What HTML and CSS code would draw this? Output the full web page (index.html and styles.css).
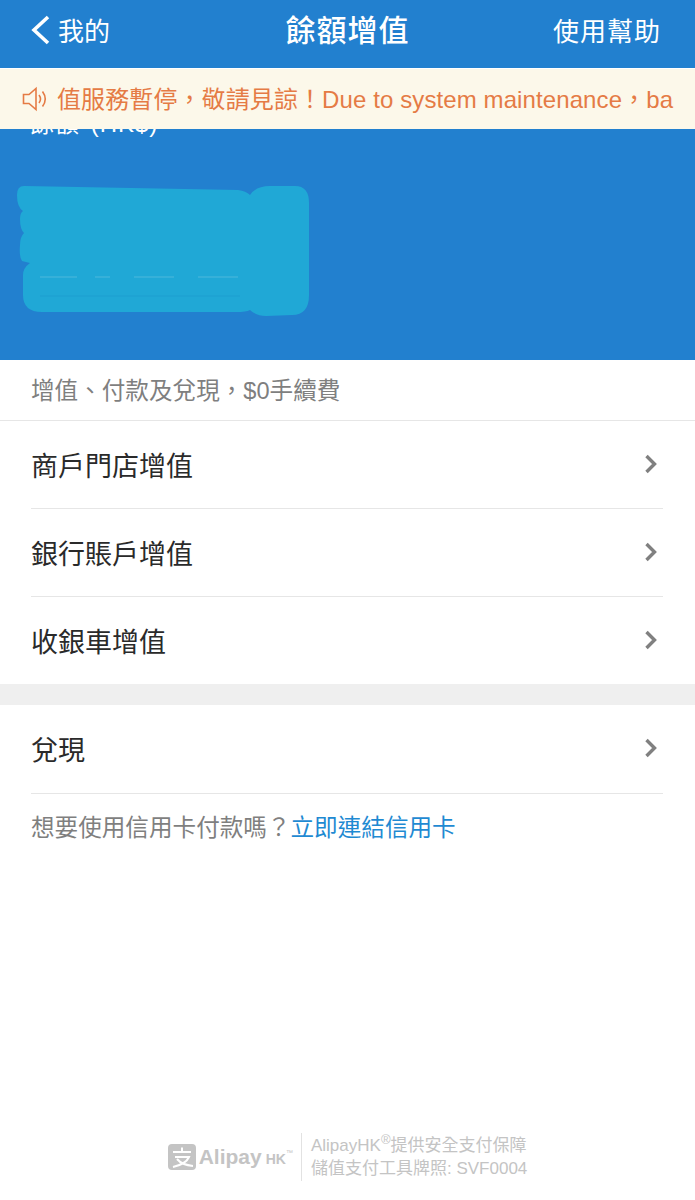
FILE: index.html
```html
<!DOCTYPE html>
<html>
<head>
<meta charset="UTF-8">
<title>餘額增值</title>
<link rel="stylesheet" href="styles.css">
</head>
<body>
	<div class="page">
		<div class="nav">
			<div class="nav_back">
				<svg class="back_icon" width="20" height="30" viewBox="0 0 20 30"><path d="M18 2 L4 15 L18 28" fill="none" stroke="#fff" stroke-width="3.6"/></svg>
				<span>我的</span>
			</div>
			<div class="nav_title">餘額增值</div>
			<div class="nav_help">使用幫助</div>
		</div>
		<div class="notice">
			<svg class="notice_icon" width="28" height="26" viewBox="0 0 28 26"><path d="M1.5 8.5 H7 L14 2.5 V23.5 L7 17.5 H1.5 Z" fill="none" stroke="#e57b45" stroke-width="1.6"/><path d="M17 9 Q20 13 17 17 M20.5 5.5 Q26 13 20.5 20.5" fill="none" stroke="#e57b45" stroke-width="1.6"/></svg>
			<div class="notice_text">值服務暫停，敬請見諒！Due to system maintenance，ba</div>
		</div>
		<div class="balance">
			<div class="balance_label">餘額 (HK$)</div>
			<svg class="scribble" width="295" height="134" viewBox="0 0 295 134"><path d="M10 3 L224 7 Q232 8 236 12 Q242 3 256 3 L281 3 Q295 3 295 20 L295 112 Q295 132 278 132 L252 133 Q242 133 236 127 Q232 129 222 129 L28 129 Q9 129 9 112 L9 92 Q9 85 16 80 L8 78 Q5 74 6 62 Q6 54 10 50 Q6 46 6 36 Q6 30 9 28 Q3 24 3 12 Q3 3 10 3 Z" fill="#20a8d6"/><path d="M26 94 H63 M81 94 H96 M120 94 H160 M184 94 H224" stroke="#4cb8dc" stroke-width="1" fill="none"/><path d="M26 113 H226" stroke="#1d9ed0" stroke-width="1" fill="none"/></svg>
		</div>
		<div class="hint">增值、付款及兌現，$0手續費</div>
		<div class="list">
			<div class="row"><span>商戶門店增值</span><svg class="arrow" width="14" height="20" viewBox="0 0 14 20"><path d="M2.5 2 L10.5 10 L2.5 18" fill="none" stroke="#808080" stroke-width="3.4"/></svg></div>
			<div class="row"><span>銀行賬戶增值</span><svg class="arrow" width="14" height="20" viewBox="0 0 14 20"><path d="M2.5 2 L10.5 10 L2.5 18" fill="none" stroke="#808080" stroke-width="3.4"/></svg></div>
			<div class="row row_last"><span>收銀車增值</span><svg class="arrow" width="14" height="20" viewBox="0 0 14 20"><path d="M2.5 2 L10.5 10 L2.5 18" fill="none" stroke="#808080" stroke-width="3.4"/></svg></div>
		</div>
		<div class="gap"></div>
		<div class="list">
			<div class="row row_single"><span>兌現</span><svg class="arrow" width="14" height="20" viewBox="0 0 14 20"><path d="M2.5 2 L10.5 10 L2.5 18" fill="none" stroke="#808080" stroke-width="3.4"/></svg></div>
		</div>
		<div class="credit">想要使用信用卡付款嗎？<span class="link">立即連結信用卡</span></div>
		<div class="footer">
			<div class="logo">
				<svg width="28" height="26" viewBox="0 0 28 26"><rect width="28" height="26" rx="4" fill="#c4c4c4"/><path d="M5 8 H23 M14 3.5 V8 M7 13 H21 Q18 20 5 23 M9 15 Q14 21 25 22" fill="none" stroke="#fff" stroke-width="2"/></svg>
				<span class="logo_name">Alipay</span><span class="logo_hk">HK</span><span class="logo_tm">™</span>
			</div>
			<div class="footer_text">
				<div>AlipayHK<sup class="reg">®</sup>提供安全支付保障</div>
				<div>儲值支付工具牌照: SVF0004</div>
			</div>
		</div>
	</div>
</body>
</html>
```

FILE: styles.css
```css
html,body{
	margin:0;
	padding:0;
	background:#fff;
}
.page{
	width:695px;
	height:1200px;
	overflow:hidden;
	display:flex;
	flex-direction:column;
	font-family:"Liberation Sans","Noto Sans CJK TC",sans-serif;
	color:#2a2a2a;
}
.nav{
	height:68px;
	flex:none;
	background:#2280cf;
	color:#fff;
	display:flex;
	align-items:center;
	justify-content:space-between;
	padding:0 34px 10px 30px;
	box-sizing:border-box;
	position:relative;
}
.nav_back{
	display:flex;
	align-items:center;
	gap:8px;
	font-size:26px;
}
.back_icon{
	display:block;
	margin-top:2px;
}
.nav_title{
	position:absolute;
	left:0;
	right:0;
	top:11px;
	text-align:center;
	font-size:30px;
	font-weight:500;
	letter-spacing:1px;
	line-height:40px;
}
.nav_help{
	font-size:26px;
	letter-spacing:1px;
}
.notice{
	height:60px;
	flex:none;
	margin-top:1px;
	background:#fcf8ea;
	display:flex;
	align-items:center;
	padding:0 23px 0 22px;
	position:relative;
	z-index:1;
}
.notice_icon{
	flex:none;
	margin-right:7px;
}
.notice_text{
	font-size:24px;
	line-height:30px;
	padding-top:2px;
	color:#e57b45;
	white-space:nowrap;
	flex:1;
	letter-spacing:.1px;
}
.balance{
	height:231px;
	flex:none;
	background:#2280cf;
	padding-left:14px;
}
.balance_label{
	margin:-16px 0 0 16px;
	height:16px;
	line-height:22px;
	font-size:24px;
	word-spacing:3px;
	letter-spacing:1px;
	color:#fff;
}
.scribble{
	display:block;
	margin-top:54px;
}
.hint{
	height:61px;
	flex:none;
	box-sizing:border-box;
	border-bottom:1px solid #e6e6e6;
	padding:0 0 2px 31px;
	display:flex;
	align-items:center;
	font-size:23.6px;
	color:#7f7f7f;
}
.list{
	flex:none;
}
.row{
	height:88px;
	box-sizing:border-box;
	margin:0 32px 0 31px;
	border-bottom:1px solid #e6e6e6;
	display:flex;
	align-items:center;
	justify-content:space-between;
	font-size:27px;
	color:#2a2a2a;
}
.row_last{
	height:87px;
	border-bottom:none;
}
.row_single{
	height:89px;
	padding-bottom:1px;
}
.arrow{
	display:block;
	margin-right:5px;
	margin-top:-2px;
}
.gap{
	height:21px;
	flex:none;
	background:#efefef;
}
.credit{
	flex:none;
	padding:16px 0 0 31px;
	font-size:23.6px;
	line-height:36px;
	color:#7f7f7f;
}
.link{
	color:#1f8ad2;
}
.footer{
	margin-top:auto;
	height:48px;
	margin-bottom:19px;
	display:flex;
	align-items:center;
	justify-content:center;
	color:#c4c4c4;
}
.logo{
	display:flex;
	align-items:center;
	padding-right:8px;
	border-right:1px solid #e2e2e2;
	height:48px;
}
.logo_name{
	font-size:21px;
	font-weight:bold;
	margin-left:3px;
}
.logo_hk{
	font-size:14px;
	font-weight:bold;
	margin-left:4px;
	margin-top:3px;
}
.logo_tm{
	font-size:7px;
	margin-top:-10px;
}
.footer_text{
	margin-left:9px;
	font-size:17px;
	line-height:23px;
}
.reg{
	font-size:13px;
	line-height:0;
}
```
